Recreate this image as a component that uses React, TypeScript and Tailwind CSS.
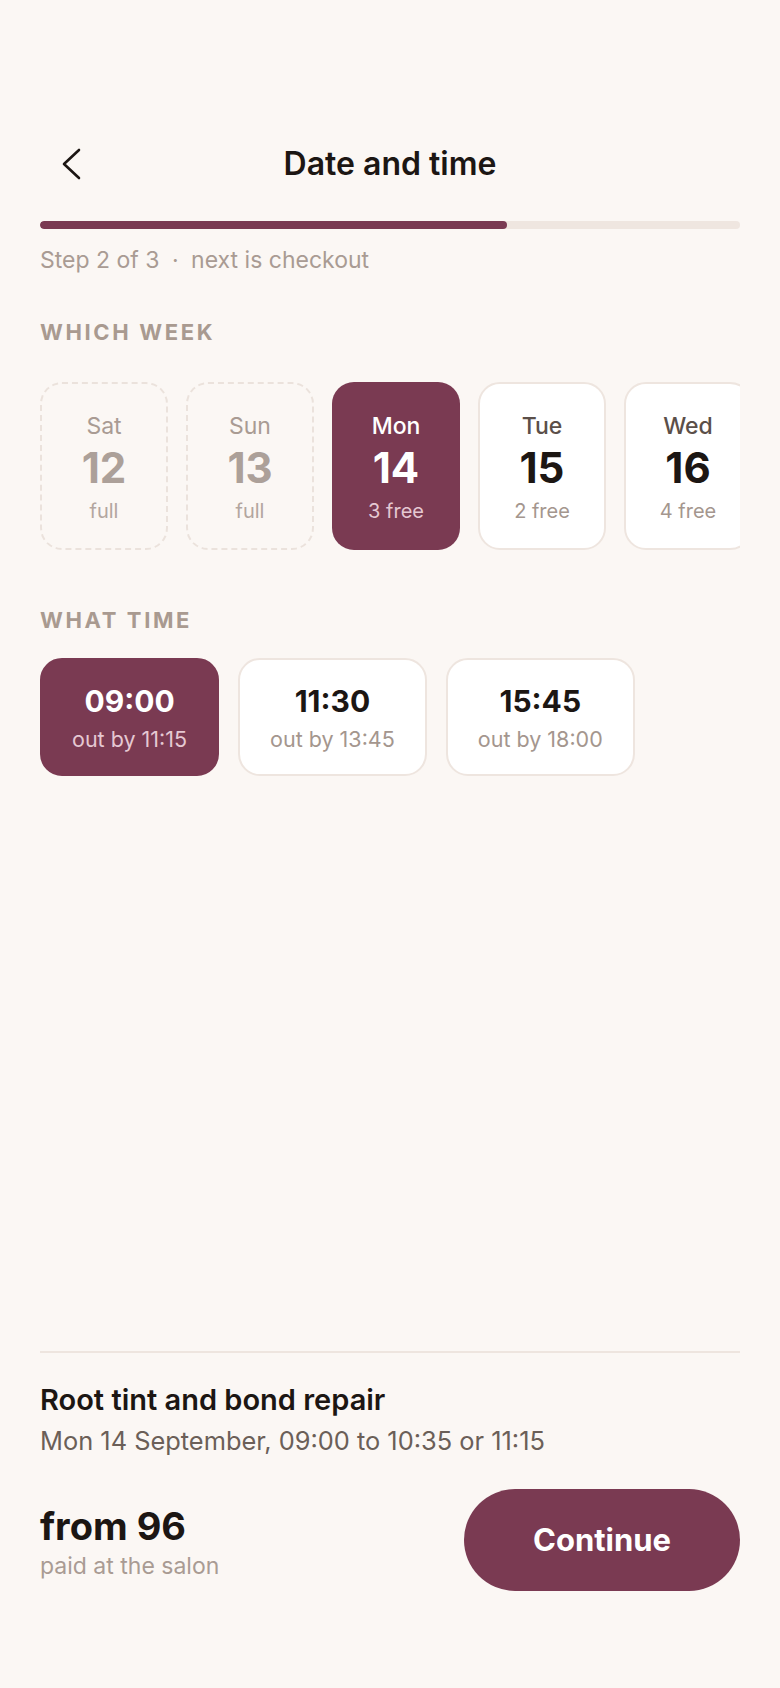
import React, { useState } from 'react';

type Day = { name: string; date: number; note: string; full?: boolean };
type Slot = { time: string; out: string };

const days: Day[] = [
  { name: 'Sat', date: 12, note: 'full', full: true },
  { name: 'Sun', date: 13, note: 'full', full: true },
  { name: 'Mon', date: 14, note: '3 free' },
  { name: 'Tue', date: 15, note: '2 free' },
  { name: 'Wed', date: 16, note: '4 free' },
  { name: 'Thu', date: 17, note: '1 free' },
];

const slots: Slot[] = [
  { time: '09:00', out: 'out by 11:15' },
  { time: '11:30', out: 'out by 13:45' },
  { time: '15:45', out: 'out by 18:00' },
];

const DayCard: React.FC<{ day: Day; selected: boolean; onPick: () => void }> = ({ day, selected, onPick }) => {
  if (day.full) {
    return (
      <div className="shrink-0 w-[128px] h-[168px] pt-[27px] rounded-[22px] border-2 border-dashed border-[#ebe2dc] flex flex-col items-center">
        <span className="text-[23px] leading-[30px] text-[#a99b93]">{day.name}</span>
        <span className="text-[42px] leading-[48px] font-bold text-[#aca099] mt-[3px]">{day.date}</span>
        <span className="text-[20px] leading-[28px] text-[#b3a69f] mt-[5px]">{day.note}</span>
      </div>
    );
  }
  return (
    <button
      type="button"
      onClick={onPick}
      className={
        selected
          ? 'shrink-0 w-[128px] h-[168px] pt-[29px] rounded-[22px] bg-[#7a3a52] flex flex-col items-center'
          : 'shrink-0 w-[128px] h-[168px] pt-[27px] rounded-[22px] bg-white border-2 border-[#eee5df] flex flex-col items-center'
      }
    >
      <span className={selected ? 'text-[23px] leading-[30px] font-medium text-white' : 'text-[23px] leading-[30px] font-medium text-[#5b4f49]'}>
        {day.name}
      </span>
      <span className={selected ? 'text-[42px] leading-[48px] font-bold text-white mt-[3px]' : 'text-[42px] leading-[48px] font-bold text-[#1c1613] mt-[3px]'}>
        {day.date}
      </span>
      <span className={selected ? 'text-[20px] leading-[28px] text-[#e5c8d2] mt-[5px]' : 'text-[20px] leading-[28px] text-[#a4968e] mt-[5px]'}>
        {day.note}
      </span>
    </button>
  );
};

export default function App() {
  const [day, setDay] = useState(2);
  const [slot, setSlot] = useState(0);

  return (
    <div className="min-h-[1688px] bg-[#fbf7f4] flex flex-col px-10 font-['Inter','Noto_Sans',sans-serif] text-[#1c1613]">
      <header className="pt-[140px]">
        <div className="relative h-12 flex items-center justify-center">
          <button type="button" className="absolute left-[20px] top-[8px]" aria-label="Back">
            <svg width="22" height="32" viewBox="0 0 22 32" fill="none">
              <path d="M19 2 L4 16 L19 30" stroke="#1c1613" strokeWidth="2.6" strokeLinecap="round" strokeLinejoin="round" />
            </svg>
          </button>
          <h1 className="text-[32px] leading-[40px] font-semibold">Date and time</h1>
        </div>
        <div className="mt-[33px] h-2 rounded-full bg-[#efe6e0] overflow-hidden">
          <div className="h-full w-2/3 rounded-full bg-[#7a3a52]" />
        </div>
        <p className="mt-[16px] text-[23px] leading-[30px] text-[#a99b93]">
          Step 2 of 3 <span className="mx-[6px]">·</span> next is checkout
        </p>
      </header>

      <section className="mt-[42px]">
        <h2 className="text-[22px] leading-[30px] font-bold tracking-[0.12em] text-[#a99a90]">WHICH WEEK</h2>
        <div className="mt-[35px] flex gap-[18px] overflow-hidden">
          {days.map((d, i) => (
            <DayCard key={d.date} day={d} selected={i === day} onPick={() => setDay(i)} />
          ))}
        </div>
      </section>

      <section className="mt-[55px]">
        <h2 className="text-[22px] leading-[30px] font-bold tracking-[0.12em] text-[#a99a90]">WHAT TIME</h2>
        <div className="mt-[23px] flex gap-[19px]">
          {slots.map((s, i) => (
            <button
              key={s.time}
              type="button"
              onClick={() => setSlot(i)}
              className={
                i === slot
                  ? 'h-[118px] px-[30px] rounded-[22px] bg-[#7a3a52] border-2 border-[#7a3a52] flex flex-col items-center justify-center gap-[5px]'
                  : 'h-[118px] px-[30px] rounded-[22px] bg-white border-2 border-[#eee5df] flex flex-col items-center justify-center gap-[5px]'
              }
            >
              <span className={i === slot ? 'text-[30px] leading-[38px] font-bold text-white' : 'text-[30px] leading-[38px] font-bold text-[#1c1613]'}>
                {s.time}
              </span>
              <span className={i === slot ? 'text-[21.5px] leading-[28px] text-[#e5c8d2]' : 'text-[21.5px] leading-[28px] text-[#a4968e]'}>
                {s.out}
              </span>
            </button>
          ))}
        </div>
      </section>

      <footer className="mt-auto border-t-2 border-[#eee5df] pt-[29px] pb-[97px]">
        <h3 className="text-[29px] leading-[36px] font-semibold">Root tint and bond repair</h3>
        <p className="mt-[6px] text-[25.4px] leading-[34px] text-[#6b5f58]">Mon 14 September, 09:00 to 10:35 or 11:15</p>
        <div className="mt-[31px] flex items-center justify-between">
          <div className="pt-[4px]">
            <div className="text-[38px] leading-[46px] font-bold">from 96</div>
            <div className="mt-[2px] text-[23px] leading-[30px] text-[#a99b93]">paid at the salon</div>
          </div>
          <button type="button" className="w-[276px] h-[102px] rounded-full bg-[#7a3a52] text-white text-[31px] font-bold">
            Continue
          </button>
        </div>
      </footer>
    </div>
  );
}
